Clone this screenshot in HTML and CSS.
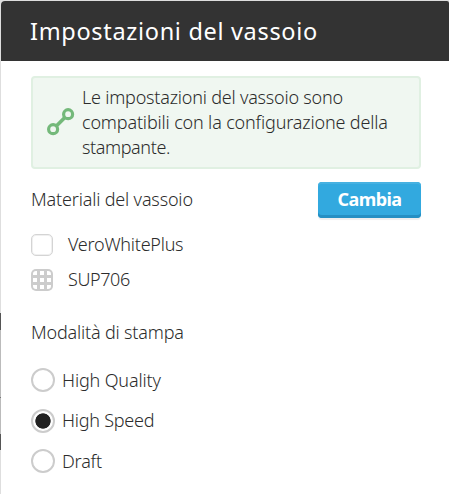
FILE: index.html
```html
<!DOCTYPE html>
<html lang="it">
<head>
<meta charset="utf-8">
<title>Impostazioni del vassoio</title>
<link rel="stylesheet" href="styles.css">
</head>
<body>
<main class="panel">
  <header class="header"><h1 class="title">Impostazioni del vassoio</h1></header>
  <div class="content">
    <div class="notice">
      <svg class="link-icon" viewBox="0 0 28 28" fill="none" stroke="#74b97a" stroke-width="3.2"><path stroke-width="3.6" d="M9.6 17.8 17.6 9.8"/><circle cx="6.1" cy="21.2" r="4.5"/><circle cx="21.1" cy="6.2" r="4.5"/></svg>
      <p class="notice-text"><span class="l1">Le impostazioni del vassoio sono</span><br><span class="l2">compatibili con la configurazione della</span><br><span class="l3">stampante.</span></p>
    </div>
    <div class="materials-head"><h2 class="heading materials">Materiali del vassoio</h2><button class="change">Cambia</button></div>
    <ul class="materials-list">
      <li class="material"><span class="swatch"></span><span class="vero">VeroWhitePlus</span></li>
      <li class="material"><svg class="grid-icon" viewBox="0 0 22 22"><rect width="22" height="22" rx="5" fill="#ccc"/><path fill="#fff" d="M5 2h1v4H2V5a3 3 0 0 1 3-3zM9 2h4v4H9zM16 2h1a3 3 0 0 1 3 3v1h-4zM2 9h4v4H2zM9 9h4v4H9zM16 9h4v4h-4zM2 16h4v4H5a3 3 0 0 1-3-3zM9 16h4v4H9zM16 16h4v1a3 3 0 0 1-3 3h-1z"/></svg><span class="sup">SUP706</span></li>
    </ul>
    <h2 class="heading mode">Modalità di stampa</h2>
    <div class="modes">
      <label class="option"><input type="radio" name="mode"><span class="quality">High Quality</span></label>
      <label class="option"><input type="radio" name="mode" checked><span class="speed">High Speed</span></label>
      <label class="option"><input type="radio" name="mode"><span class="draft">Draft</span></label>
    </div>
  </div>
</main>
</body>
</html>
```
FILE: styles.css
```css
* { box-sizing: border-box; }
body {
  margin: 0;
  height: 494px;
  overflow: hidden;
  padding: 1px 0 0 1px;
  color: #2c2c2c;
  font: 300 18px/25px "Noto Sans", "Open Sans", sans-serif;
  background: linear-gradient(#dedede 0 313px, #555 313px 330px, #bbb 330px 397px, #777 397px 398px, #bbb 398px 434px, #555 434px 450px, #dedede 450px);
}
.panel { height: 493px; background: #fff; border-radius: 4px 2px 0 0; overflow: hidden; white-space: nowrap; }
.header { height: 60px; padding-left: 29px; background: #333; }
.title { margin: 0; font-size: 23.5px; line-height: 60px; font-weight: 400; letter-spacing: 0.68px; color: #fff; }
.content { padding: 15px 28px 0 30px; }
.notice { display: flex; height: 93px; padding: 7px 0 0 14px; border: 2px solid #e0f0e2; border-radius: 4px; background: #f0f7f1; }
.link-icon { width: 28px; height: 28px; margin: 23px 7px 0 0; flex: none; }
.notice-text { margin: 0; }
.l1 { letter-spacing: -0.21px; }
.l2 { letter-spacing: -0.16px; }
.l3 { letter-spacing: -0.4px; }
.materials-head { display: flex; justify-content: space-between; height: 37px; margin-top: 13px; }
.heading { margin: 0; font-size: 18px; font-weight: 300; line-height: 25px; }
.materials { padding-top: 5px; letter-spacing: -0.17px; }
.change {
  width: 103px; height: 36px; padding: 0 0 3px; border: 0; border-radius: 4px;
  background: #32a9df; color: #fff; font: 700 18px/30px "Noto Sans", "Open Sans", sans-serif;
  letter-spacing: -0.6px;
  box-shadow: inset 0 -3px #258fc3, inset 0 2px #46b1e1, 0 2px 1px #eee;
}
.materials-list { list-style: none; margin: 8px 0 0; padding: 0; }
.material { display: flex; align-items: center; height: 35px; }
.swatch { width: 22px; height: 22px; margin-right: 15px; border: 1.5px solid #d4d4d4; border-radius: 5px; box-shadow: inset 0 0 0 1px #f0f0f0; }
.grid-icon { width: 22px; height: 22px; margin-right: 15px; }
.vero { letter-spacing: -0.25px; }
.sup { letter-spacing: -0.4px; }
.mode { margin-top: 23px; letter-spacing: -0.18px; }
.modes { margin-top: 15px; }
.option { display: flex; align-items: center; height: 40.5px; }
.option input { appearance: none; width: 24px; height: 24px; margin: 0 7px 0 0; border: 2px solid #ccc; border-radius: 50%; background: #fff; }
.option input:checked { background: radial-gradient(circle, #222 7.3px, #fff 8px); }
.quality { letter-spacing: -0.15px; }
.speed { letter-spacing: -0.25px; }
.draft { letter-spacing: -0.2px; }
```
